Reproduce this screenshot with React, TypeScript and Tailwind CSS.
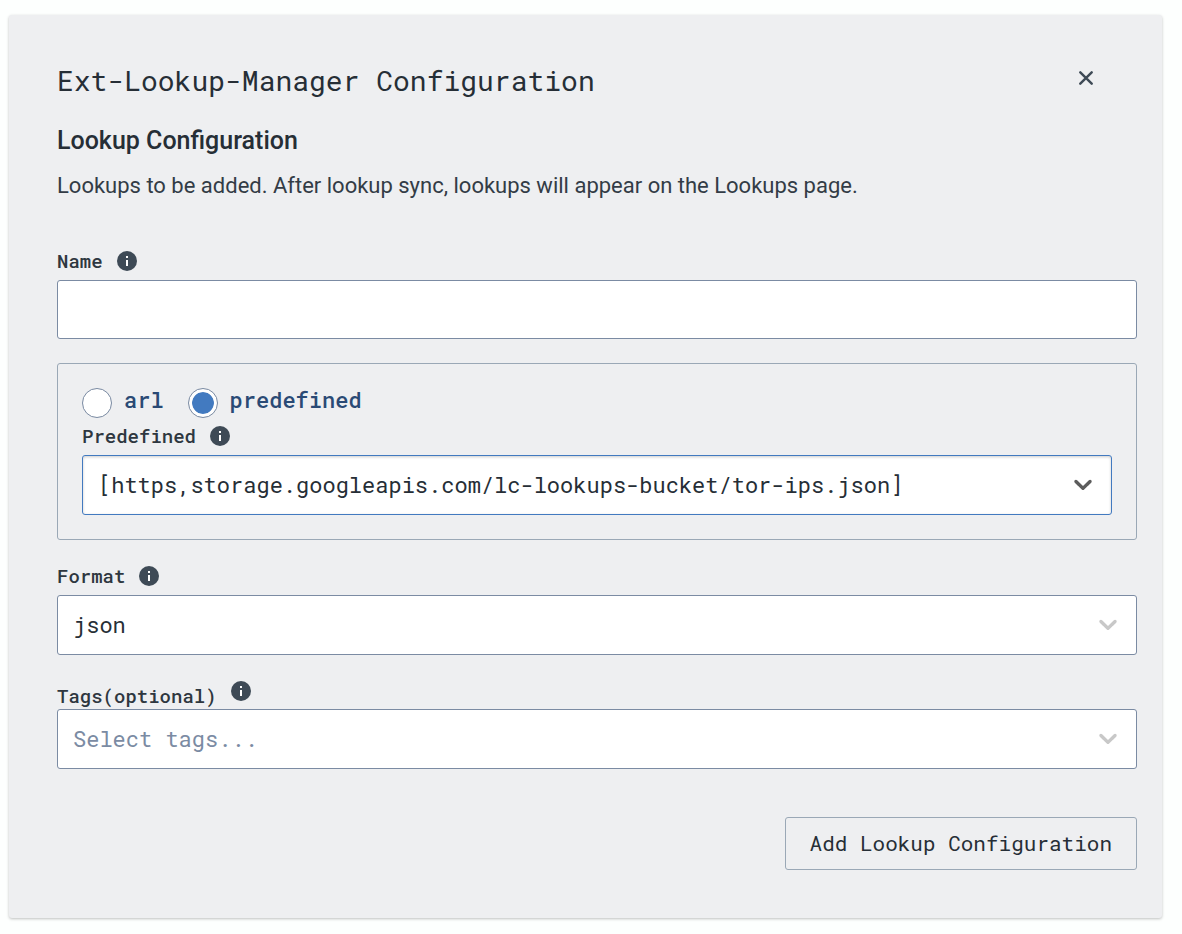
import { useState, type ReactNode } from 'react';

const MONO = "font-['Roboto_Mono','DejaVu_Sans_Mono',monospace]";
const FIELD =
  'block w-full appearance-none rounded-[3px] border bg-white px-[15px] text-[22px] leading-[30px] outline-none';

function InfoIcon() {
  return (
    <svg viewBox="0 0 20 20" className="my-[2px] size-5 shrink-0" aria-hidden="true">
      <circle cx="10" cy="10" r="10" fill="#3e4a56" />
      <path d="M9 5h2v2H9zM9 9h2v6H9z" fill="#fff" />
    </svg>
  );
}

function FieldLabel({ htmlFor, children }: { htmlFor: string; children: ReactNode }) {
  return (
    <div className="mb-[7px] flex items-center gap-[14px]">
      <label htmlFor={htmlFor} className="text-[19px] leading-6 font-medium text-[#2e3740]">
        {children}
      </label>
      <InfoIcon />
    </div>
  );
}

function Chevron({ className }: { className: string }) {
  return (
    <svg
      viewBox="0 0 20 20"
      fill="currentColor"
      aria-hidden="true"
      className={`pointer-events-none absolute top-[14px] right-[14px] size-[30px] ${className}`}
    >
      <path d="M4.516 7.548c0.436-0.446 1.043-0.481 1.576 0l3.908 3.747 3.908-3.747c0.533-0.481 1.141-0.446 1.574 0 0.436 0.445 0.408 1.197 0 1.615-0.406 0.418-4.695 4.502-4.695 4.502-0.217 0.223-0.502 0.335-0.787 0.335s-0.57-0.112-0.789-0.335c0 0-4.287-4.084-4.695-4.502s-0.436-1.17 0-1.615z" />
    </svg>
  );
}

function Radio({ value, checked, onSelect }: { value: string; checked: boolean; onSelect: () => void }) {
  return (
    <label className="flex items-center gap-3">
      <input
        type="radio"
        name="source"
        value={value}
        checked={checked}
        onChange={onSelect}
        className="size-[30px] shrink-0 appearance-none rounded-full border border-[#7b8ba3] bg-white bg-clip-content p-[3px] shadow-[inset_0_0_0_14px_#fff] checked:bg-[#427ac0] checked:shadow-[inset_0_0_0_3px_#fff]"
      />
      <span className="pb-[6px] text-[22px] leading-6 font-medium text-[#2a4a75]">{value}</span>
    </label>
  );
}

export default function App() {
  const [source, setSource] = useState('predefined');

  return (
    <div className="min-h-screen bg-[#fdfffe] pt-[15px] pr-5 pb-4 pl-[9px]">
      <main
        className={`rounded-[3px] bg-[#eeeff1] py-12 pr-[25px] pl-12 shadow-[0_1px_3px_rgba(0,0,0,0.25)] ${MONO}`}
      >
        <header className="flex items-start justify-between">
          <h1 className="text-[28px] leading-9 text-[#262e36]">Ext-Lookup-Manager Configuration</h1>
          <button type="button" aria-label="Close" className="mr-[35px] flex h-[30px] w-8 items-center justify-center">
            <svg viewBox="0 0 14 14" className="size-[14px]" fill="none" stroke="#3e4a56" strokeWidth="2.4" strokeLinecap="round">
              <path d="M1.3 1.3l11.4 11.4M12.7 1.3L1.3 12.7" />
            </svg>
          </button>
        </header>

        <h2 className="mt-[26px] font-[Roboto,sans-serif] text-[25px] leading-8 font-medium text-[#262e36]">
          Lookup Configuration
        </h2>
        <p className="mt-[13px] font-[Roboto,sans-serif] text-[22px] leading-8 text-[#333c46]">
          Lookups to be added. After lookup sync, lookups will appear on the Lookups page.
        </p>

        <form className="mt-[47px]" onSubmit={(event) => event.preventDefault()}>
          <FieldLabel htmlFor="name">Name</FieldLabel>
          <input id="name" type="text" className={`${FIELD} h-[59px] border-[#7b8ba3] text-[#262e36]`} />

          <fieldset className="mt-6 rounded-[3px] border border-[#9aa8b6] p-6">
            <div className="mb-[6px] flex gap-6">
              <Radio value="arl" checked={source === 'arl'} onSelect={() => setSource('arl')} />
              <Radio value="predefined" checked={source === 'predefined'} onSelect={() => setSource('predefined')} />
            </div>
            <FieldLabel htmlFor="predefined">Predefined</FieldLabel>
            <div className="relative">
              <select
                id="predefined"
                className={`${FIELD} h-[60px] border-[#427ac0] text-[#262e36] shadow-[inset_0_1px_3px_rgba(0,0,0,0.2)]`}
              >
                <option>[https,storage.googleapis.com/lc-lookups-bucket/tor-ips.json]</option>
              </select>
              <Chevron className="text-[#5c5c5c]" />
            </div>
          </fieldset>

          <div className="mt-6">
            <FieldLabel htmlFor="format">Format</FieldLabel>
            <div className="relative">
              <select id="format" className={`${FIELD} h-[60px] border-[#7b8ba3] text-[#262e36]`}>
                <option>json</option>
              </select>
              <Chevron className="text-[#c8c8c8]" />
            </div>
          </div>

          <div className="mt-6">
            <div className="flex h-[30px] items-start gap-[14px]">
              <label htmlFor="tags" className="self-end pb-px text-[19px] leading-6 font-medium text-[#2e3740]">
                Tags(optional)
              </label>
              <InfoIcon />
            </div>
            <div className="relative">
              <select id="tags" className={`${FIELD} h-[60px] border-[#7b8ba3] text-[#7b8ba3]`}>
                <option>Select tags...</option>
              </select>
              <Chevron className="text-[#c8c8c8]" />
            </div>
          </div>

          <div className="mt-12 flex justify-end">
            <button
              type="submit"
              className="rounded-[3px] border border-[#9aa8b6] px-6 pt-[10px] pb-[11px] text-[21px] leading-[30px] text-[#262e36]"
            >
              Add Lookup Configuration
            </button>
          </div>
        </form>
      </main>
    </div>
  );
}
